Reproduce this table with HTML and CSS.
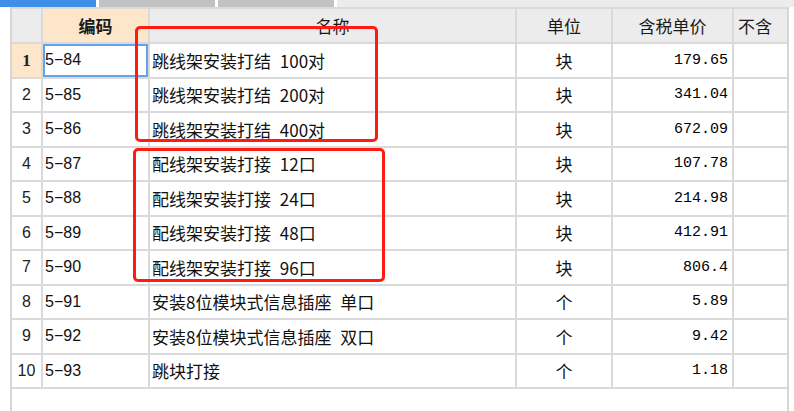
FILE: index.html
```html
<!DOCTYPE html>
<html lang="zh">
<head>
<meta charset="utf-8">
<link rel="stylesheet" href="styles.css">
</head>
<body>
<div class="page">
  <div class="tabs">
    <div class="tab tab-active"></div>
    <div class="tab tab-gray"></div>
    <div class="tab tab-gray"></div>
    <div class="tab tab-rest"></div>
  </div>
  <div class="sheet">
    <div class="grid">
      <div class="c hd"></div>
      <div class="c hd hd-sel">编码</div>
      <div class="c hd center">名称</div>
      <div class="c hd center">单位</div>
      <div class="c hd center">含税单价</div>
      <div class="c hd left">不含</div>

      <div class="c num num-sel">1</div>
      <div class="c code sel">5−84</div>
      <div class="c name">跳线架安装打结 100对</div>
      <div class="c unit">块</div>
      <div class="c price">179.65</div>
      <div class="c"></div>

      <div class="c num">2</div>
      <div class="c code">5−85</div>
      <div class="c name">跳线架安装打结 200对</div>
      <div class="c unit">块</div>
      <div class="c price">341.04</div>
      <div class="c"></div>

      <div class="c num">3</div>
      <div class="c code">5−86</div>
      <div class="c name">跳线架安装打结 400对</div>
      <div class="c unit">块</div>
      <div class="c price">672.09</div>
      <div class="c"></div>

      <div class="c num">4</div>
      <div class="c code">5−87</div>
      <div class="c name">配线架安装打接 12口</div>
      <div class="c unit">块</div>
      <div class="c price">107.78</div>
      <div class="c"></div>

      <div class="c num">5</div>
      <div class="c code">5−88</div>
      <div class="c name">配线架安装打接 24口</div>
      <div class="c unit">块</div>
      <div class="c price">214.98</div>
      <div class="c"></div>

      <div class="c num">6</div>
      <div class="c code">5−89</div>
      <div class="c name">配线架安装打接 48口</div>
      <div class="c unit">块</div>
      <div class="c price">412.91</div>
      <div class="c"></div>

      <div class="c num">7</div>
      <div class="c code">5−90</div>
      <div class="c name">配线架安装打接 96口</div>
      <div class="c unit">块</div>
      <div class="c price">806.4</div>
      <div class="c"></div>

      <div class="c num">8</div>
      <div class="c code">5−91</div>
      <div class="c name">安装8位模块式信息插座 单口</div>
      <div class="c unit">个</div>
      <div class="c price">5.89</div>
      <div class="c"></div>

      <div class="c num">9</div>
      <div class="c code">5−92</div>
      <div class="c name">安装8位模块式信息插座 双口</div>
      <div class="c unit">个</div>
      <div class="c price">9.42</div>
      <div class="c"></div>

      <div class="c num">10</div>
      <div class="c code">5−93</div>
      <div class="c name">跳块打接</div>
      <div class="c unit">个</div>
      <div class="c price">1.18</div>
      <div class="c"></div>
    </div>
    <div class="mark mark-1"></div>
    <div class="mark mark-2"></div>
  </div>
</div>
</body>
</html>
```

FILE: styles.css
```css
html, body {
  margin: 0;
  padding: 0;
  background: #ffffff;
}

.page {
  width: 794px;
  height: 411px;
  overflow: hidden;
  display: flex;
  flex-direction: column;
  font-family: "Noto Sans CJK SC", "Liberation Sans", sans-serif;
  color: #111;
}

.tabs {
  display: flex;
  gap: 3px;
  height: 7px;
  flex: none;
}

.tab-active { width: 96px; background: #3f8fe6; }
.tab-gray { width: 116px; background: #c2c2c2; }
.tab-rest { flex: 1; background: #ececec; }

.sheet {
  position: relative;
  flex: 1;
  margin-left: 10px;
  width: 775px;
  border-left: 2px solid #d6d6d6;
  border-right: 2px solid #d6d6d6;
}

.grid {
  display: grid;
  grid-template-columns: 29px 105px 365px 94px 119px 53px;
  grid-template-rows: 33px repeat(10, 32.5px);
  gap: 2px;
  padding: 2px 0 2px 0;
  background: #dadada;
  width: 775px;
}

.c {
  background: #ffffff;
  display: flex;
  align-items: center;
  overflow: hidden;
  white-space: nowrap;
  font-size: 17px;
  line-height: 1;
}

.hd {
  background: #ececec;
  font-size: 17px;
  justify-content: center;
  color: #1a1a1a;
}

.hd.left {
  justify-content: flex-start;
  padding-left: 4px;
}

.hd-sel {
  background: #fde6ca;
  font-weight: bold;
}

.num {
  justify-content: center;
  font-family: "Liberation Sans", sans-serif;
  font-size: 16px;
  color: #222;
}

.num-sel {
  background: #fde6ca;
  font-weight: bold;
  font-family: "Liberation Serif", serif;
  font-size: 17px;
}

.code {
  font-family: "Liberation Sans", sans-serif;
  font-size: 16px;
  padding-left: 2px;
}

.sel {
  box-shadow: inset 0 0 0 2px #62a3ea;
}

.name {
  padding-left: 2px;
  word-spacing: 5px;
}

.unit {
  justify-content: center;
}

.price {
  justify-content: flex-end;
  padding-right: 4px;
  font-family: "Liberation Mono", monospace;
  font-size: 15px;
  color: #000;
}

.mark {
  position: absolute;
  border: 3px solid #ff1a12;
  border-radius: 5px;
}

.mark-1 {
  left: 123px;
  top: 19px;
  width: 237px;
  height: 110px;
}

.mark-2 {
  left: 121px;
  top: 141px;
  width: 246px;
  height: 128px;
}
```
